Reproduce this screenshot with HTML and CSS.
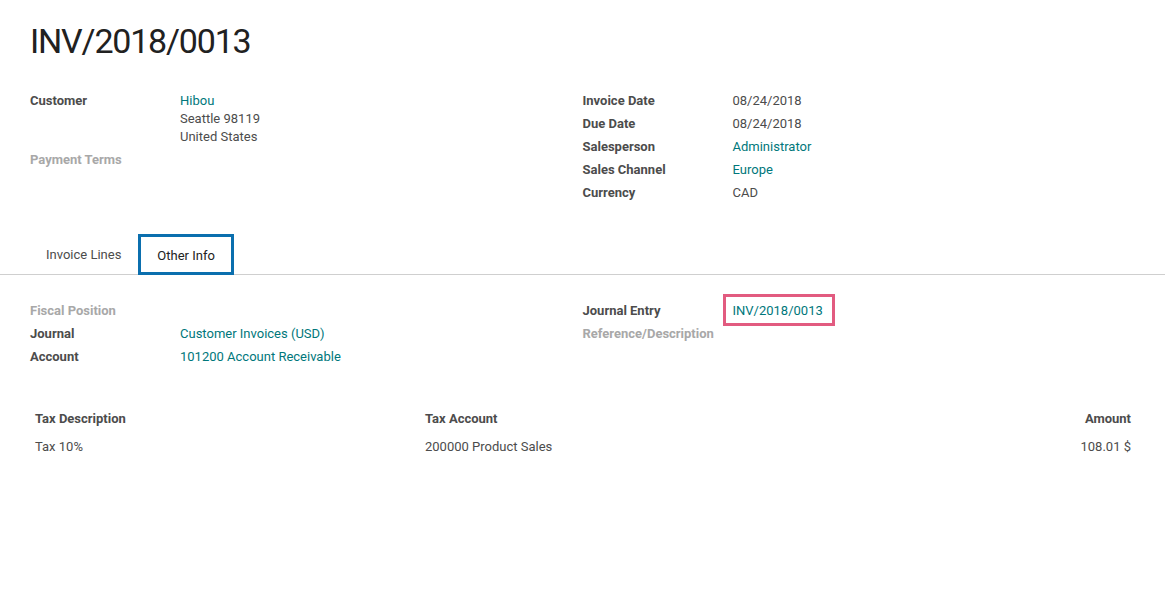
FILE: index.html
```html
<!DOCTYPE html>
<html lang="en">
<head>
  <meta charset="UTF-8" />
  <title>INV/2018/0013</title>
  <link rel="stylesheet" href="styles.css">
</head>
<body>
  <div class="sheet">
    <h1 class="title">INV/2018/0013</h1>

    <div class="groups">
      <div class="group">
        <div class="row">
          <div class="label">Customer</div>
          <div class="value">
            <a href="#">Hibou</a><br>
            Seattle 98119<br>
            United States
          </div>
        </div>
        <div class="row">
          <div class="label muted">Payment Terms</div>
          <div class="value"></div>
        </div>
      </div>
      <div class="group">
        <div class="row"><div class="label">Invoice Date</div><div class="value">08/24/2018</div></div>
        <div class="row"><div class="label">Due Date</div><div class="value">08/24/2018</div></div>
        <div class="row"><div class="label">Salesperson</div><div class="value"><a href="#">Administrator</a></div></div>
        <div class="row"><div class="label">Sales Channel</div><div class="value"><a href="#">Europe</a></div></div>
        <div class="row"><div class="label">Currency</div><div class="value">CAD</div></div>
      </div>
    </div>
  </div>

  <div class="tabs">
    <a class="tab" href="#">Invoice Lines</a>
    <a class="tab active" href="#">Other Info</a>
  </div>

  <div class="sheet tab-pane">
    <div class="groups">
      <div class="group">
        <div class="row"><div class="label muted">Fiscal Position</div><div class="value"></div></div>
        <div class="row"><div class="label">Journal</div><div class="value"><a href="#">Customer Invoices (USD)</a></div></div>
        <div class="row"><div class="label">Account</div><div class="value"><a href="#">101200 Account Receivable</a></div></div>
      </div>
      <div class="group">
        <div class="row">
          <div class="label">Journal Entry</div>
          <div class="value"><span class="highlight"><a href="#">INV/2018/0013</a></span></div>
        </div>
        <div class="row"><div class="label muted">Reference/Description</div><div class="value"></div></div>
      </div>
    </div>

    <div class="tax-table">
      <div class="tax-row head">
        <div>Tax Description</div>
        <div>Tax Account</div>
        <div class="num">Amount</div>
      </div>
      <div class="tax-row">
        <div>Tax 10%</div>
        <div>200000 Product Sales</div>
        <div class="num">108.01 $</div>
      </div>
    </div>
  </div>
</body>
</html>
```

FILE: styles.css
```css
* {
  margin: 0;
  padding: 0;
  box-sizing: border-box;
}

body {
  background-color: #fff;
  font-family: Roboto, "Liberation Sans", sans-serif;
  font-size: 13px;
  line-height: 18px;
  color: #4c4c4c;
}

a {
  color: #00777b;
  text-decoration: none;
}

.sheet {
  padding: 0 30px;
}

.title {
  font-size: 34px;
  font-weight: 400;
  letter-spacing: -1.2px;
  line-height: 43px;
  color: #212121;
  padding-top: 20px;
}

.groups {
  display: flex;
  margin-top: 29px;
}

.group {
  width: 50%;
}

.row {
  display: flex;
  padding-bottom: 5px;
}

.label {
  width: 150px;
  flex-shrink: 0;
  font-weight: bold;
  color: #4c4c4c;
}

.label.muted {
  color: #a8a8a8;
}

.highlight {
  display: inline-block;
  border: 3px solid #e25b80;
  padding: 5px 9px 3px 7px;
  margin: -8px -12px -6px -10px;
}

.tabs {
  display: flex;
  margin-top: 27px;
  padding: 0 30px;
  border-bottom: 1px solid #cfcfcf;
}

.tab {
  display: block;
  height: 40px;
  line-height: 38px;
  padding: 2px 16px 0;
  color: #4c4c4c;
}

.tab.active {
  color: #222;
  border: 3px solid #0b6fae;
  line-height: 35px;
  height: 41px;
  margin-bottom: -1px;
  margin-left: 1px;
  padding: 1px 16px 0;
}

.tab-pane .groups {
  margin-top: 27px;
}

.tax-table {
  margin-top: 39px;
}

.tax-row {
  display: grid;
  grid-template-columns: 390px 1fr 200px;
  padding: 0 4px 0 5px;
  height: 28px;
  line-height: 18px;
}

.tax-row.head {
  font-weight: bold;
}

.tax-row .num {
  text-align: right;
}
```
